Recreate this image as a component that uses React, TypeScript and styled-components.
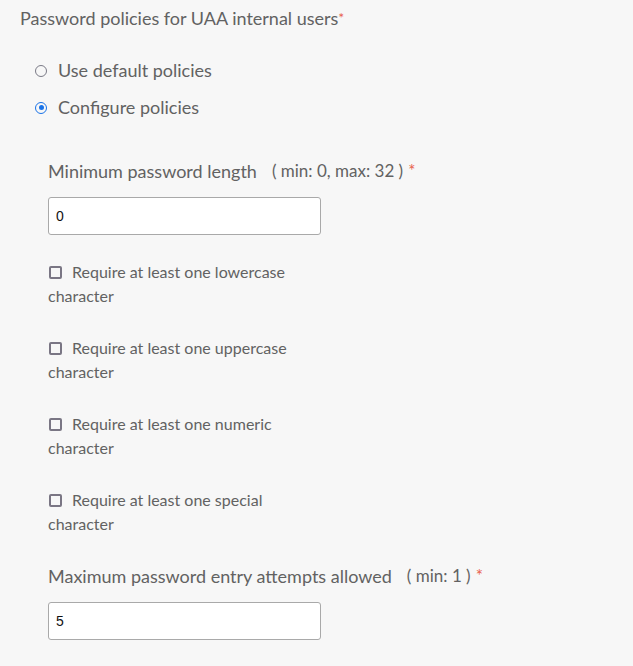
import React from "react";
import styled, { createGlobalStyle } from "styled-components";

const Global = createGlobalStyle`
  html, body { margin: 0; padding: 0; background: #f7f7f7; }
  body { font-family: Lato, "Source Sans Pro", sans-serif; color: #626262; }
`;

const Page = styled.div`
  padding: 6px 0 20px 20px;
  width: 613px;
  box-sizing: border-box;
`;

const Title = styled.div`
  font-size: 18px;
  line-height: 24px;
`;

const Req = styled.span<{ $gap?: number; $size?: number }>`
  color: #e8604d;
  font-size: ${(p) => p.$size ?? 14}px;
  vertical-align: top;
  margin-left: ${(p) => p.$gap ?? 0}px;
`;

const RadioGroup = styled.div`
  display: flex;
  flex-direction: column;
  gap: 14px;
  margin: 29px 0 0 15px;
`;

const RadioRow = styled.label`
  display: flex;
  align-items: center;
  gap: 11px;
  font-size: 18px;
  line-height: 23px;
`;

const RadioDot = styled.span<{ $on?: boolean }>`
  width: 12px;
  height: 12px;
  box-sizing: border-box;
  border-radius: 50%;
  border: 1.5px solid ${(p) => (p.$on ? "#1a73e8" : "#7a7a86")};
  display: flex;
  align-items: center;
  justify-content: center;
  &::after {
    content: "";
    width: 5px;
    height: 5px;
    border-radius: 50%;
    background: ${(p) => (p.$on ? "#1a73e8" : "transparent")};
  }
`;

const Section = styled.div`
  margin: 40px 0 0 28px;
  display: flex;
  flex-direction: column;
`;

const FieldLabel = styled.div`
  font-size: 18px;
  line-height: 24px;
  display: flex;
  align-items: flex-start;
`;

const Hint = styled.span`
  font-size: 17px;
  margin-left: 15px;
  line-height: 24px;
`;

const Input = styled.input`
  margin-top: 14px;
  width: 273px;
  height: 38px;
  box-sizing: border-box;
  border: 1px solid #a9a9a9;
  border-radius: 3px;
  background: #fff;
  padding: 0 7px;
  font-family: "Liberation Sans", Arial, sans-serif;
  font-size: 14px;
  color: #111;
  outline: none;
`;

const CheckList = styled.div`
  display: flex;
  flex-direction: column;
  gap: 28px;
  margin: 25px 0 28px;
`;

const CheckRow = styled.label`
  display: block;
  width: 250px;
  font-size: 16px;
  line-height: 24px;
`;

const Box = styled.span`
  display: inline-block;
  width: 13px;
  height: 13px;
  box-sizing: border-box;
  border: 2px solid #7a7684;
  border-radius: 2px;
  vertical-align: -1px;
  margin: 0 10px 0 1px;
`;

const checks = [
  "Require at least one lowercase character",
  "Require at least one uppercase character",
  "Require at least one numeric character",
  "Require at least one special character",
];

export default function App() {
  return (
    <>
      <Global />
      <Page>
        <Title>
          Password policies for UAA internal users<Req>*</Req>
        </Title>
        <RadioGroup>
          <RadioRow>
            <RadioDot />
            Use default policies
          </RadioRow>
          <RadioRow>
            <RadioDot $on />
            Configure policies
          </RadioRow>
        </RadioGroup>
        <Section>
          <FieldLabel>
            Minimum password length<Hint>( min: 0, max: 32 )</Hint>
            <Req $gap={5} $size={17}>*</Req>
          </FieldLabel>
          <Input defaultValue="0" />
          <CheckList>
            {checks.map((c) => (
              <CheckRow key={c}>
                <Box />
                {c}
              </CheckRow>
            ))}
          </CheckList>
          <FieldLabel>
            Maximum password entry attempts allowed<Hint>( min: 1 )</Hint>
            <Req $gap={5} $size={17}>*</Req>
          </FieldLabel>
          <Input defaultValue="5" />
        </Section>
      </Page>
    </>
  );
}
